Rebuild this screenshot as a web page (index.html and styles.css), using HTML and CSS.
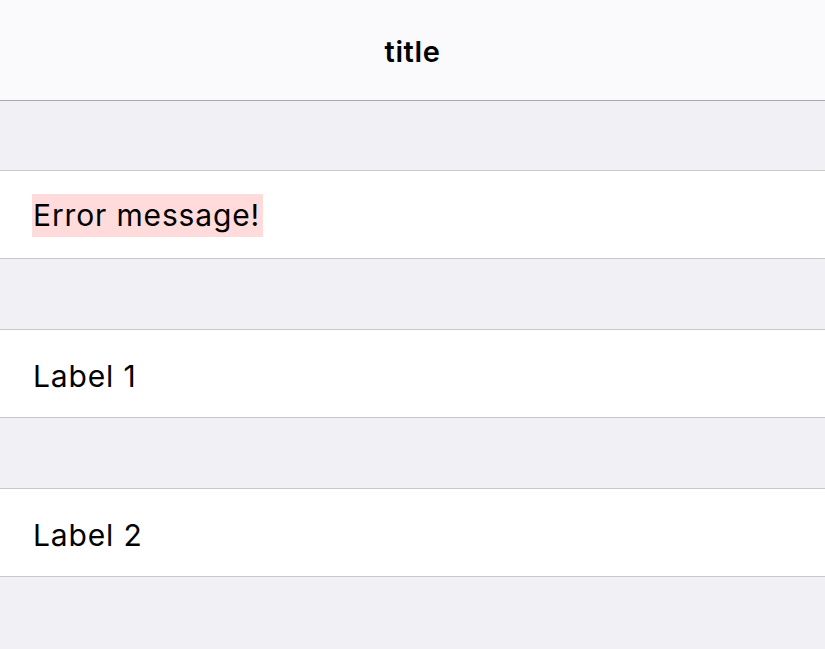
FILE: index.html
```html
<!DOCTYPE html>
<html>
<head>
<meta charset="utf-8">
<link rel="stylesheet" href="styles.css">
</head>
<body>
<header class="navbar"><h1 class="title">title</h1></header>
<main class="table">
  <div class="spacer spacer-first"></div>
  <div class="cell cell-error"><span class="error">Error message!</span></div>
  <div class="spacer"></div>
  <div class="cell"><span class="label">Label 1</span></div>
  <div class="spacer"></div>
  <div class="cell"><span class="label">Label 2</span></div>
  <div class="rest"></div>
</main>
</body>
</html>
```
FILE: styles.css
```css
html, body {
  margin: 0;
  padding: 0;
  height: 100%;
}
body {
  font-family: Inter, "Noto Sans", "Liberation Sans", sans-serif;
  color: #000;
  background: #f1f1f5;
  display: flex;
  flex-direction: column;
}
.navbar {
  box-sizing: border-box;
  height: 101px;
  padding-top: 34px;
  background: #fafafc;
  border-bottom: 1px solid #a9a9ad;
  display: flex;
  align-items: flex-start;
  justify-content: center;
  flex: none;
}
.title {
  margin: 0;
  font-size: 29px;
  line-height: 35px;
  font-weight: 600;
  letter-spacing: 0.6px;
}
.table {
  display: flex;
  flex-direction: column;
  flex: 1;
}
.spacer {
  height: 70px;
  background: #f1f1f5;
  border-bottom: 1px solid #c9c9cd;
}
.spacer-first {
  height: 69px;
}
.cell {
  box-sizing: border-box;
  height: 88px;
  padding-top: 25px;
  background: #fff;
  border-bottom: 1px solid #c9c9cd;
  display: flex;
  align-items: flex-start;
  padding-left: 32px;
}
.cell-error {
  padding-top: 23px;
}
.error, .label {
  font-size: 30px;
  line-height: 43px;
  font-weight: 400;
  letter-spacing: 0.85px;
}
.error {
  background: #ffdcdb;
  padding: 0 3px 0 1px;
}
.label {
  padding-left: 1px;
}
.rest {
  flex: 1;
  background: #f1f1f5;
}
```
